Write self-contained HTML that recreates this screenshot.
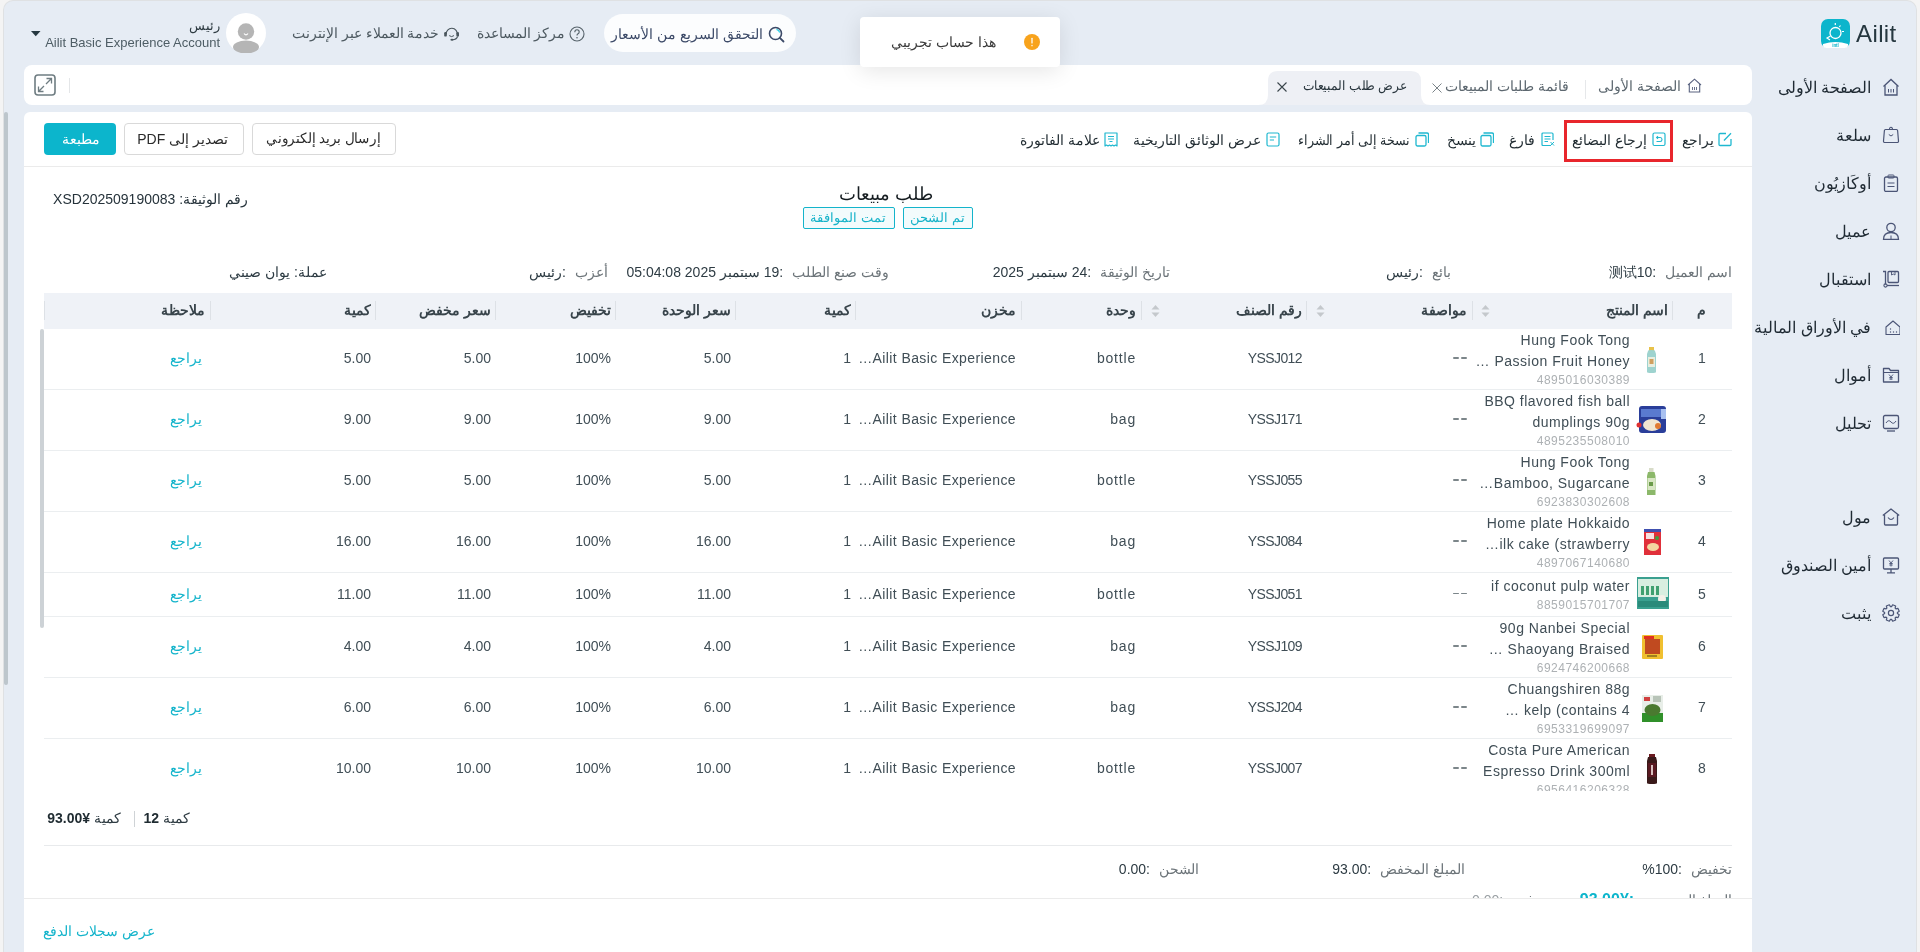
<!DOCTYPE html>
<html lang="ar"><head><meta charset="utf-8"><title>عرض طلب المبيعات</title><style>
*{box-sizing:border-box}
html,body{margin:0;padding:0}
body{width:1920px;height:952px;overflow:hidden;position:relative;background:#f4f4f4;font-family:"Liberation Sans",sans-serif}
.t{position:absolute;white-space:nowrap;direction:rtl;text-align:right}
.tl{position:absolute;white-space:nowrap;direction:ltr;text-align:left}
.b{position:absolute;display:block}
</style></head><body><div id="root" style="position:absolute;left:0;top:0;width:1920px;height:952px;will-change:transform">
<div class="b" style="left:4px;top:1px;width:1912px;height:960px;background:#e6ecf4;border-radius:9px 9px 0 0;box-shadow:0 0 0 1px #dfe1e3"></div>
<svg class="b" style="left:1821px;top:19px;" width="29" height="29" viewBox="0 0 29 29"><rect x="0" y="0" width="29" height="29" rx="7" fill="#0cb5cc"/>
<path d="M2 25 Q14.5 21 27 25 L27 26 Q27 29 24 29 L5 29 Q2 29 2 26Z" fill="#fff"/>
<text x="14.5" y="28.3" font-size="4.5" text-anchor="middle" fill="#0cb5cc" font-weight="bold" font-family="Liberation Sans">intl</text>
<circle cx="14.5" cy="14" r="5.5" fill="none" stroke="#fff" stroke-width="1.3"/>
<path d="M9.5 17 L6 19 L9 21" fill="none" stroke="#fff" stroke-width="1.2"/>
<path d="M14.3 4 L14.3 6" stroke="#fff" stroke-width="1.2"/><path d="M19.5 6.5 L18.3 8" stroke="#fff" stroke-width="1.2"/><path d="M21 12.5 L23 12.5" stroke="#fff" stroke-width="1.2"/></svg>
<div class="tl " style="left:1856px;top:18.5px;line-height:30px;font-size:24px;color:#26373f;font-weight:normal;letter-spacing:0.4px">Ailit</div>
<div class="b" style="left:860px;top:17px;width:200px;height:50px;background:#fff;border-radius:4px;box-shadow:0 4px 22px rgba(0,0,0,0.10);z-index:5"></div>
<svg class="b" style="left:1024px;top:34px;z-index:6" width="16" height="16" viewBox="0 0 16 16"><circle cx="8" cy="8" r="8" fill="#f8a31c"/><rect x="7.3" y="3.8" width="1.4" height="5.8" rx="0.5" fill="#fff" fill-opacity="0.9"/><rect x="7.3" y="10.8" width="1.4" height="1.5" rx="0.5" fill="#fff" fill-opacity="0.9"/></svg>
<div class="t " style="right:924px;top:32.0px;line-height:20px;font-size:14px;color:#3a3a3a;font-weight:normal;z-index:6">هذا حساب تجريبي</div>
<div class="b" style="left:604px;top:14px;width:192px;height:38px;background:#fcfdfe;border-radius:19px"></div>
<svg class="b" style="left:768px;top:26px;" width="17" height="17" viewBox="0 0 17 17"><circle cx="7.5" cy="7.5" r="6" fill="none" stroke="#3c4a68" stroke-width="1.6"/><path d="M11.8 11.8 L15.5 15.5" stroke="#3c4a68" stroke-width="1.8" stroke-linecap="round"/><path d="M8.5 3.3 A4.5 4.5 0 0 1 11.7 6.5" fill="none" stroke="#2ad0e6" stroke-width="1.2"/></svg>
<div class="t " style="right:1157px;top:24.0px;line-height:20px;font-size:14px;color:#3c4a68;font-weight:normal;">التحقق السريع من الأسعار</div>
<svg class="b" style="left:569px;top:26px;" width="16" height="16" viewBox="0 0 16 16"><circle cx="8" cy="8" r="7" fill="none" stroke="#56626a" stroke-width="1.1"/><path d="M5.8 6.2 Q5.8 3.8 8 3.8 Q10.2 3.8 10.2 5.9 Q10.2 7.2 8.7 7.9 Q8 8.3 8 9.5" fill="none" stroke="#56626a" stroke-width="1.1"/><circle cx="8" cy="11.7" r="0.8" fill="#56626a"/></svg>
<div class="t " style="right:1354.5px;top:24.0px;line-height:20px;font-size:13.5px;color:#4d5960;font-weight:normal;">مركز المساعدة</div>
<svg class="b" style="left:443px;top:25px;" width="17" height="16" viewBox="0 0 17 16"><path d="M3.2 9.5 A5.6 5.6 0 1 1 14.3 9.8" fill="none" stroke="#4a565d" stroke-width="1.1"/><rect x="1.2" y="7" width="2.6" height="4.6" rx="1.2" fill="#4a565d"/><rect x="13.4" y="7" width="2.6" height="4.6" rx="1.2" fill="#4a565d"/><path d="M14.6 11.5 Q13.5 14.6 9.5 14.8" fill="none" stroke="#4a565d" stroke-width="1.1"/><ellipse cx="9" cy="14.8" rx="1.6" ry="1" fill="#4a565d"/><path d="M6.2 10.6 Q8.6 12.6 11 10.6" fill="none" stroke="#4a565d" stroke-width="1"/></svg>
<div class="t " style="right:1480.5px;top:24.0px;line-height:20px;font-size:13.5px;color:#4d5960;font-weight:normal;">خدمة العملاء عبر الإنترنت</div>
<svg class="b" style="left:226px;top:13px;" width="40" height="40" viewBox="0 0 40 40"><circle cx="20" cy="20" r="20" fill="#fff"/><circle cx="20" cy="18.5" r="8.2" fill="#b5b5b5"/><path d="M18 20.5 Q20 23.2 22 20.5" fill="none" stroke="#fff" stroke-width="1.1"/><ellipse cx="20" cy="34" rx="13" ry="6.5" fill="#b5b5b5"/></svg>
<div class="t " style="right:1700px;top:15.5px;line-height:20px;font-size:13px;color:#2e3b42;font-weight:normal;">رئيس</div>
<div class="t " style="right:1700px;top:32.5px;line-height:20px;font-size:13px;color:#4e5d65;font-weight:normal;direction:ltr">Ailit Basic Experience Account</div>
<svg class="b" style="left:31px;top:31px;" width="10" height="6" viewBox="0 0 10 6"><path d="M0 0 L9.5 0 L4.75 5.3Z" fill="#263840"/></svg>
<svg class="b" style="left:1882px;top:78px;" width="18" height="18" viewBox="0 0 18 18"><path d="M1.5 8.5 L9 1.5 L16.5 8.5" fill="none" stroke="#4b5576" stroke-width="1.3"/><path d="M3 7.5 L3 17 L15 17 L15 7.5" fill="none" stroke="#4b5576" stroke-width="1.3"/><path d="M6.5 11 V14.5 M9 11 V14.5 M11.5 11 V14.5" stroke="#4b5576" stroke-width="1"/></svg>
<div class="t " style="right:49px;top:76.5px;line-height:22px;font-size:16px;color:#1f2a33;font-weight:normal;">الصفحة الأولى</div>
<svg class="b" style="left:1882px;top:126px;" width="18" height="18" viewBox="0 0 18 18"><path d="M3.5 3.5 L14.5 3.5 Q15.5 3.5 15.6 4.5 L16.5 15 Q16.6 16.5 15 16.5 L3 16.5 Q1.4 16.5 1.5 15 L2.4 4.5 Q2.5 3.5 3.5 3.5Z" fill="none" stroke="#4b5576" stroke-width="1.2" stroke-linejoin="round"/><path d="M7.5 3.5 Q7.5 1.2 9 1.2 Q10.5 1.2 10.5 3.5" fill="none" stroke="#4b5576" stroke-width="1.1"/><path d="M6.8 8.5 Q9 11.5 11.2 8.5" fill="none" stroke="#4b5576" stroke-width="1"/></svg>
<div class="t " style="right:49px;top:124.5px;line-height:22px;font-size:16px;color:#1f2a33;font-weight:normal;">سلعة</div>
<svg class="b" style="left:1882px;top:174px;" width="18" height="18" viewBox="0 0 18 18"><rect x="2.5" y="3" width="13" height="14.5" rx="1.5" fill="none" stroke="#4b5576" stroke-width="1.3"/><rect x="6" y="1" width="6" height="3" rx="0.8" fill="none" stroke="#4b5576" stroke-width="1"/><path d="M5.5 9 H12.5 M5.5 12.5 H12.5" stroke="#4b5576" stroke-width="1"/></svg>
<div class="t " style="right:49px;top:172.5px;line-height:22px;font-size:16px;color:#1f2a33;font-weight:normal;">أوكَازيُون</div>
<svg class="b" style="left:1882px;top:222px;" width="18" height="18" viewBox="0 0 18 18"><circle cx="9" cy="5.5" r="4.2" fill="none" stroke="#4b5576" stroke-width="1.3"/><path d="M1.5 17.5 Q1.5 10.5 9 10.5 Q16.5 10.5 16.5 17.5Z" fill="none" stroke="#4b5576" stroke-width="1.3"/><path d="M9 13.5 V17" stroke="#4b5576" stroke-width="1"/></svg>
<div class="t " style="right:49px;top:220.5px;line-height:22px;font-size:16px;color:#1f2a33;font-weight:normal;">عميل</div>
<svg class="b" style="left:1882px;top:270px;" width="18" height="18" viewBox="0 0 18 18"><path d="M1 1.5 L3.5 1.5 L3.5 14.5" fill="none" stroke="#4b5576" stroke-width="1.3"/><path d="M5 15.5 H17" stroke="#4b5576" stroke-width="1.3"/><circle cx="3.5" cy="15.5" r="1.6" fill="none" stroke="#4b5576" stroke-width="1.1"/><rect x="6" y="1.5" width="10.5" height="11" rx="1" fill="none" stroke="#4b5576" stroke-width="1.3"/><path d="M9.5 1.5 V5 L11.25 4 L13 5 V1.5" fill="none" stroke="#4b5576" stroke-width="0.9"/></svg>
<div class="t " style="right:49px;top:268.5px;line-height:22px;font-size:16px;color:#1f2a33;font-weight:normal;">استقبال</div>
<svg class="b" style="left:1882px;top:318px;" width="18" height="18" viewBox="0 0 18 18"><path d="M4 9 L11 3 L18 9 L18 16.5 L4 16.5Z" fill="none" stroke="#4b5576" stroke-width="1.1" stroke-linejoin="round"/><circle cx="8.5" cy="11" r="0.7" fill="#4b5576"/><circle cx="8.5" cy="14" r="0.7" fill="#4b5576"/><circle cx="11.5" cy="14" r="0.7" fill="#4b5576"/><circle cx="14.5" cy="14" r="0.7" fill="#4b5576"/></svg>
<div class="t " style="right:49px;top:316.5px;line-height:22px;font-size:16px;color:#1f2a33;font-weight:normal;">في الأوراق المالية</div>
<svg class="b" style="left:1882px;top:366px;" width="18" height="18" viewBox="0 0 18 18"><path d="M1.5 2.5 L7 2.5 L8.5 4.5 L16.5 4.5 L16.5 16 L1.5 16Z" fill="none" stroke="#4b5576" stroke-width="1.3" stroke-linejoin="round"/><path d="M1.5 6.5 H16.5" stroke="#4b5576" stroke-width="1"/><path d="M7 8.5 L9 11 L11 8.5 M9 11 V14 M7.3 11.5 H10.7 M7.3 13 H10.7" fill="none" stroke="#4b5576" stroke-width="0.9"/></svg>
<div class="t " style="right:49px;top:364.5px;line-height:22px;font-size:16px;color:#1f2a33;font-weight:normal;">أموال</div>
<svg class="b" style="left:1882px;top:414px;" width="18" height="18" viewBox="0 0 18 18"><rect x="1.5" y="1.5" width="15" height="13" rx="1.5" fill="none" stroke="#4b5576" stroke-width="1.3"/><path d="M4 9 Q6.5 5 9 8 Q11.5 11 14 7" fill="none" stroke="#4b5576" stroke-width="1"/><path d="M5 17 H13" stroke="#4b5576" stroke-width="1.3"/></svg>
<div class="t " style="right:49px;top:412.5px;line-height:22px;font-size:16px;color:#1f2a33;font-weight:normal;">تحليل</div>
<svg class="b" style="left:1882px;top:508px;" width="18" height="18" viewBox="0 0 18 18"><path d="M0.8 7.5 L9 1 L17.2 7.5" fill="none" stroke="#4b5576" stroke-width="1.3" stroke-linejoin="round"/><path d="M2.5 6.5 L2.5 16 Q2.5 17 3.5 17 L14.5 17 Q15.5 17 15.5 16 L15.5 6.5" fill="none" stroke="#4b5576" stroke-width="1.3"/><path d="M6 9.5 Q9 13.5 12 9.5" fill="none" stroke="#4b5576" stroke-width="1.1"/></svg>
<div class="t " style="right:49px;top:506.5px;line-height:22px;font-size:16px;color:#1f2a33;font-weight:normal;">مول</div>
<svg class="b" style="left:1882px;top:556px;" width="18" height="18" viewBox="0 0 18 18"><rect x="1.5" y="2" width="15" height="11" rx="1" fill="none" stroke="#4b5576" stroke-width="1.3"/><path d="M9 13 V16.5 M5 16.8 H13" stroke="#4b5576" stroke-width="1.3"/><path d="M7 4.5 L9 7 L11 4.5 M9 7 V10.5 M7.3 7.5 H10.7 M7.3 9 H10.7" fill="none" stroke="#4b5576" stroke-width="0.9"/></svg>
<div class="t " style="right:49px;top:554.5px;line-height:22px;font-size:16px;color:#1f2a33;font-weight:normal;">أمين الصندوق</div>
<svg class="b" style="left:1882px;top:604px;" width="18" height="18" viewBox="0 0 18 18"><polygon points="15.38,9.56 17.23,10.67 16.00,13.64 13.90,13.11 13.11,13.90 13.64,16.00 10.67,17.23 9.56,15.38 8.44,15.38 7.33,17.23 4.36,16.00 4.89,13.90 4.10,13.11 2.00,13.64 0.77,10.67 2.62,9.56 2.62,8.44 0.77,7.33 2.00,4.36 4.10,4.89 4.89,4.10 4.36,2.00 7.33,0.77 8.44,2.62 9.56,2.62 10.67,0.77 13.64,2.00 13.11,4.10 13.90,4.89 16.00,4.36 17.23,7.33 15.38,8.44" fill="none" stroke="#4b5576" stroke-width="1.2" stroke-linejoin="round"/><circle cx="9" cy="9" r="2.6" fill="none" stroke="#4b5576" stroke-width="1.2"/></svg>
<div class="t " style="right:49px;top:602.5px;line-height:22px;font-size:16px;color:#1f2a33;font-weight:normal;">يثبت</div>
<div class="b" style="left:24px;top:65px;width:1728px;height:40px;background:#fff;border-radius:8px"></div>
<svg class="b" style="left:34px;top:74px;" width="22" height="22" viewBox="0 0 22 22"><rect x="1" y="1" width="20" height="20" rx="3" fill="none" stroke="#6f7d82" stroke-width="1.6"/><path d="M12.5 4.5 H17.5 V9.5 M17.5 4.5 L12 10" fill="none" stroke="#6f7d82" stroke-width="1.3"/><path d="M9.5 17.5 H4.5 V12.5 M4.5 17.5 L10 12" fill="none" stroke="#6f7d82" stroke-width="1.3"/></svg>
<div class="b" style="left:69px;top:78px;width:1px;height:15px;background:#e4e6e8"></div>
<svg class="b" style="left:1687px;top:78px;" width="15" height="15" viewBox="0 0 15 15"><path d="M1 7 L7.5 1.2 L14 7" fill="none" stroke="#5a6380" stroke-width="1.1"/><path d="M2.3 6 L2.3 14 L12.7 14 L12.7 6" fill="none" stroke="#5a6380" stroke-width="1.1"/><path d="M5.5 9 V12 M7.5 9 V12 M9.5 9 V12" stroke="#5a6380" stroke-width="0.9"/></svg>
<div class="t " style="right:239px;top:76.0px;line-height:20px;font-size:14px;color:#5d6870;font-weight:normal;">الصفحة الأولى</div>
<div class="b" style="left:1585px;top:80px;width:1px;height:19px;background:#e6e8ea"></div>
<div class="t " style="right:351px;top:76.0px;line-height:20px;font-size:14px;color:#5d6870;font-weight:normal;">قائمة طلبات المبيعات</div>
<svg class="b" style="left:1432px;top:83px;" width="10" height="10" viewBox="0 0 10 10"><path d="M0.5 0.5 L9.5 9.5 M9.5 0.5 L0.5 9.5" stroke="#7a8388" stroke-width="1"/></svg>
<svg class="b" style="left:1258px;top:71px" width="173" height="34" viewBox="0 0 173 34"><path d="M0 34 Q10 34 10 24 L10 10 Q10 0 20 0 L153 0 Q163 0 163 10 L163 24 Q163 34 173 34Z" fill="#eef0f5"/></svg>
<div class="t " style="right:513px;top:76.0px;line-height:20px;font-size:13px;color:#27343c;font-weight:normal;transform:scaleX(0.94);transform-origin:right center">عرض طلب المبيعات</div>
<svg class="b" style="left:1277px;top:82px;" width="10" height="10" viewBox="0 0 10 10"><path d="M0.5 0.5 L9.5 9.5 M9.5 0.5 L0.5 9.5" stroke="#3a454b" stroke-width="1.1"/></svg>
<div class="b" style="left:24px;top:112px;width:1728px;height:850px;background:#fff;border-radius:6px 6px 0 0"></div>
<div class="b" style="left:4px;top:112px;width:4px;height:573px;background:#bdc6cc;border-radius:2px"></div>
<div class="b" style="left:24px;top:166px;width:1728px;height:1px;background:#ebebeb"></div>
<div class="b" style="left:44px;top:123px;width:72px;height:32px;background:#0cb5cc;border-radius:4px"></div>
<div class="t " style="right:1820px;top:129.0px;line-height:20px;font-size:14px;color:#fff;font-weight:normal;">مطبعة</div>
<div class="b" style="left:124px;top:123px;width:120px;height:32px;background:#fff;border:1px solid #d9d9d9;border-radius:4px"></div>
<div class="t " style="right:1692px;top:129.0px;line-height:20px;font-size:14px;color:#2a2a2a;font-weight:normal;">تصدير إلى PDF</div>
<div class="b" style="left:252px;top:123px;width:144px;height:32px;background:#fff;border:1px solid #d9d9d9;border-radius:4px"></div>
<div class="t " style="right:1539.5px;top:129.0px;line-height:20px;font-size:13.5px;color:#2a2a2a;font-weight:normal;transform:scaleX(0.965);transform-origin:right center">إرسال بريد إلكتروني</div>
<svg class="b" style="left:1718px;top:132px;" width="14" height="15" viewBox="0 0 14 15"><path d="M8 1.5 H2 Q1 1.5 1 2.5 V12.5 Q1 13.5 2 13.5 H12 Q13 13.5 13 12.5 V7" fill="none" stroke="#1fb8d0" stroke-width="1.3"/><path d="M6 8.5 L13 1.2" stroke="#1fb8d0" stroke-width="1.3"/></svg>
<div class="t " style="right:206px;top:129.5px;line-height:20px;font-size:14px;color:#1f2a30;font-weight:normal;">يراجع</div>
<svg class="b" style="left:1652px;top:132px;" width="14" height="15" viewBox="0 0 14 15"><rect x="1" y="1" width="12" height="12.5" rx="1.5" fill="none" stroke="#1fb8d0" stroke-width="1.2"/><path d="M4.8 5.5 H8.2 Q10 5.5 10 7.5 Q10 9.5 8.2 9.5 H4.5" fill="none" stroke="#1fb8d0" stroke-width="1.1"/><path d="M6 4.2 L4.6 5.5 L6 6.8" fill="none" stroke="#1fb8d0" stroke-width="1.1"/></svg>
<div class="t " style="right:273px;top:129.5px;line-height:20px;font-size:14px;color:#1f2a30;font-weight:normal;">إرجاع البضائع</div>
<svg class="b" style="left:1541px;top:132px;" width="14" height="15" viewBox="0 0 14 15"><path d="M10 13.5 H2 Q1 13.5 1 12.5 V2 Q1 1 2 1 H11 Q12 1 12 2 V8" fill="none" stroke="#1fb8d0" stroke-width="1.2"/><path d="M3.5 4.5 H9.5 M3.5 7 H9.5 M3.5 9.5 H7" stroke="#1fb8d0" stroke-width="1"/><path d="M9.5 10 L13 13.5 M13 10 L9.5 13.5" stroke="#1fb8d0" stroke-width="1"/></svg>
<div class="t " style="right:385px;top:129.5px;line-height:20px;font-size:14px;color:#1f2a30;font-weight:normal;">فارغ</div>
<svg class="b" style="left:1480px;top:132px;" width="14" height="15" viewBox="0 0 14 15"><rect x="1" y="3.5" width="10" height="10.5" rx="1.5" fill="none" stroke="#1fb8d0" stroke-width="1.3"/><path d="M3.5 1 H12 Q13.5 1 13.5 2.5 V11" fill="none" stroke="#1fb8d0" stroke-width="1.3"/></svg>
<div class="t " style="right:444px;top:129.5px;line-height:20px;font-size:14px;color:#1f2a30;font-weight:normal;">ينسخ</div>
<svg class="b" style="left:1415px;top:132px;" width="14" height="15" viewBox="0 0 14 15"><rect x="1" y="3.5" width="10" height="10.5" rx="1.5" fill="none" stroke="#1fb8d0" stroke-width="1.3"/><path d="M3.5 1 H12 Q13.5 1 13.5 2.5 V11" fill="none" stroke="#1fb8d0" stroke-width="1.3"/></svg>
<div class="t " style="right:510px;top:129.5px;line-height:20px;font-size:14px;color:#1f2a30;font-weight:normal;transform:scaleX(0.905);transform-origin:right center">نسخة إلى أمر الشراء</div>
<svg class="b" style="left:1266px;top:132px;" width="14" height="15" viewBox="0 0 14 15"><rect x="1" y="1" width="12" height="13" rx="1.5" fill="none" stroke="#1fb8d0" stroke-width="1.2"/><path d="M3.8 5 H10.2 M3.8 8 H8" stroke="#1fb8d0" stroke-width="1.1"/></svg>
<div class="t " style="right:659px;top:129.5px;line-height:20px;font-size:14px;color:#1f2a30;font-weight:normal;">عرض الوثائق التاريخية</div>
<svg class="b" style="left:1104px;top:132px;" width="14" height="15" viewBox="0 0 14 15"><path d="M1 1 H13 V14 L11.5 13 L10 14 L8.5 13 L7 14 L5.5 13 L4 14 L2.5 13 L1 14Z" fill="none" stroke="#1fb8d0" stroke-width="1.2" stroke-linejoin="round"/><path d="M4 4.5 H10 M4 7 H10 M5.5 9.5 H8.5" stroke="#1fb8d0" stroke-width="1"/></svg>
<div class="t " style="right:820px;top:129.5px;line-height:20px;font-size:14px;color:#1f2a30;font-weight:normal;">علامة الفاتورة</div>
<div class="b" style="left:1564px;top:120px;width:109px;height:42px;border:3px solid #e8262c"></div>
<div class="t " style="right:987px;top:181.5px;line-height:24px;font-size:17.5px;color:#151c20;font-weight:normal;">طلب مبيعات</div>
<div class="b" style="left:903px;top:207px;width:70px;height:22px;border:1.5px solid #14b4cb;background:#f3fbfc;border-radius:2px"></div>
<div class="t " style="right:955px;top:208.0px;line-height:20px;font-size:13px;color:#17b3c9;font-weight:normal;">تم الشحن</div>
<div class="b" style="left:803px;top:207px;width:92px;height:22px;border:1.5px solid #14b4cb;background:#f3fbfc;border-radius:2px"></div>
<div class="t " style="right:1034px;top:208.0px;line-height:20px;font-size:13px;color:#17b3c9;font-weight:normal;">تمت الموافقة</div>
<div class="t " style="right:1672px;top:189.0px;line-height:20px;font-size:14px;color:#26333b;font-weight:normal;">رقم الوثيقة: XSD202509190083</div>
<div class="t" style="right:188px;top:262px;line-height:20px;font-size:14px;color:#6c7479">اسم العميل<span style="color:#2d3b43;margin-right:9px">:测试10</span></div>
<div class="t" style="right:469px;top:262px;line-height:20px;font-size:14px;color:#6c7479">بائع<span style="color:#2d3b43;margin-right:9px">:رئيس</span></div>
<div class="t" style="right:750px;top:262px;line-height:20px;font-size:14px;color:#6c7479">تاريخ الوثيقة<span style="color:#2d3b43;margin-right:9px">:24 سبتمبر 2025</span></div>
<div class="t" style="right:1031px;top:262px;line-height:20px;font-size:14px;color:#6c7479">وقت صنع الطلب<span style="color:#2d3b43;margin-right:9px">:19 سبتمبر 2025 05:04:08</span></div>
<div class="t" style="right:1312px;top:262px;line-height:20px;font-size:14px;color:#6c7479">أعزب<span style="color:#2d3b43;margin-right:9px">:رئيس</span></div>
<div class="t" style="right:1593px;top:262px;line-height:20px;font-size:14px;color:#2d3b43">عملة: يوان صيني</div>
<div class="b" style="left:44px;top:293px;width:1688px;height:36px;background:#eff2f7"></div>
<div class="b" style="left:1672px;top:301px;width:1px;height:19px;background:#dde1e6"></div>
<div class="b" style="left:1472px;top:301px;width:1px;height:19px;background:#dde1e6"></div>
<div class="b" style="left:1306px;top:301px;width:1px;height:19px;background:#dde1e6"></div>
<div class="b" style="left:1141px;top:301px;width:1px;height:19px;background:#dde1e6"></div>
<div class="b" style="left:1021px;top:301px;width:1px;height:19px;background:#dde1e6"></div>
<div class="b" style="left:855px;top:301px;width:1px;height:19px;background:#dde1e6"></div>
<div class="b" style="left:735px;top:301px;width:1px;height:19px;background:#dde1e6"></div>
<div class="b" style="left:615px;top:301px;width:1px;height:19px;background:#dde1e6"></div>
<div class="b" style="left:495px;top:301px;width:1px;height:19px;background:#dde1e6"></div>
<div class="b" style="left:375px;top:301px;width:1px;height:19px;background:#dde1e6"></div>
<div class="b" style="left:210px;top:301px;width:1px;height:19px;background:#dde1e6"></div>
<div class="b" style="left:44px;top:301px;width:1px;height:19px;background:#dde1e6"></div>
<div class="t " style="right:214px;top:299.5px;line-height:20px;font-size:14px;color:#38444b;font-weight:bold;">م</div>
<div class="t " style="right:252px;top:299.5px;line-height:20px;font-size:14px;color:#38444b;font-weight:bold;">اسم المنتج</div>
<div class="t " style="right:453px;top:299.5px;line-height:20px;font-size:14px;color:#38444b;font-weight:bold;">مواصفة</div>
<div class="t " style="right:618px;top:299.5px;line-height:20px;font-size:14px;color:#38444b;font-weight:bold;">رقم الصنف</div>
<div class="t " style="right:784px;top:299.5px;line-height:20px;font-size:14px;color:#38444b;font-weight:bold;">وحدة</div>
<div class="t " style="right:904px;top:299.5px;line-height:20px;font-size:14px;color:#38444b;font-weight:bold;">مخزن</div>
<div class="t " style="right:1069px;top:299.5px;line-height:20px;font-size:14px;color:#38444b;font-weight:bold;">كمية</div>
<div class="t " style="right:1189px;top:299.5px;line-height:20px;font-size:14px;color:#38444b;font-weight:bold;">سعر الوحدة</div>
<div class="t " style="right:1309px;top:299.5px;line-height:20px;font-size:14px;color:#38444b;font-weight:bold;">تخفيض</div>
<div class="t " style="right:1429px;top:299.5px;line-height:20px;font-size:14px;color:#38444b;font-weight:bold;">سعر مخفض</div>
<div class="t " style="right:1549px;top:299.5px;line-height:20px;font-size:14px;color:#38444b;font-weight:bold;">كمية</div>
<div class="t " style="right:1715px;top:299.5px;line-height:20px;font-size:14px;color:#38444b;font-weight:bold;">ملاحظة</div>
<svg class="b" style="left:1481px;top:304px;" width="9" height="14" viewBox="0 0 9 14"><path d="M4.5 1 L8.5 5.5 H0.5Z" fill="#c4c8cc"/><path d="M4.5 13 L8.5 8.5 H0.5Z" fill="#c4c8cc"/></svg>
<svg class="b" style="left:1316px;top:304px;" width="9" height="14" viewBox="0 0 9 14"><path d="M4.5 1 L8.5 5.5 H0.5Z" fill="#c4c8cc"/><path d="M4.5 13 L8.5 8.5 H0.5Z" fill="#c4c8cc"/></svg>
<svg class="b" style="left:1151px;top:304px;" width="9" height="14" viewBox="0 0 9 14"><path d="M4.5 1 L8.5 5.5 H0.5Z" fill="#c4c8cc"/><path d="M4.5 13 L8.5 8.5 H0.5Z" fill="#c4c8cc"/></svg>
<div class="b" style="left:24px;top:329px;width:1728px;height:462px;overflow:hidden">
<div class="b" style="left:20px;top:60px;width:1688px;height:1px;background:#ebeef0"></div>
<div class="b" style="left:1658px;top:19.0px;width:40px;text-align:center;line-height:20px;font-size:14px;color:#404e56">1</div>
<svg class="b" style="left:1612px;top:13px" width="33" height="33" viewBox="0 0 33 33"><rect x="13" y="5" width="5" height="4" fill="#e8c24a"/><path d="M12 9 Q12 8 15.5 8 Q19 8 19 9 L20 12 L20 30 Q20 31 15.5 31 Q11 31 11 30 L11 12Z" fill="#9ed3cf"/><rect x="12" y="15" width="7" height="10" fill="#e8eee0"/><rect x="13.5" y="17" width="4" height="5" fill="#d0a060"/></svg>
<div class="t" style="right:122px;top:0.5px;line-height:20px;font-size:14px;color:#404e56;direction:ltr;letter-spacing:0.5px">Hung Fook Tong</div>
<div class="t" style="right:122px;top:21.5px;line-height:20px;font-size:14px;color:#404e56;direction:ltr;letter-spacing:0.5px">… Passion Fruit Honey</div>
<div class="t" style="right:122px;top:42.5px;line-height:16px;font-size:12px;color:#adb1b4;direction:ltr;letter-spacing:0.5px">4895016030389</div>
<div class="b" style="left:1429px;top:28.0px;width:6px;height:1.6px;background:#7c868a;border-radius:1px"></div>
<div class="b" style="left:1437px;top:28.0px;width:6px;height:1.6px;background:#7c868a;border-radius:1px"></div>
<div class="t" style="right:450px;top:19.0px;line-height:20px;font-size:14px;color:#404e56;direction:ltr;letter-spacing:-0.6px">YSSJ012</div>
<div class="t" style="right:616px;top:19.0px;line-height:20px;font-size:14px;color:#404e56;direction:ltr;letter-spacing:0.8px">bottle</div>
<div class="t" style="right:736px;top:19.0px;line-height:20px;font-size:14px;color:#404e56;direction:ltr;letter-spacing:0.4px">…Ailit Basic Experience</div>
<div class="t" style="right:901px;top:19.0px;line-height:20px;font-size:14px;color:#404e56;">1</div>
<div class="t" style="right:1021px;top:19.0px;line-height:20px;font-size:14px;color:#404e56;direction:ltr">5.00</div>
<div class="t" style="right:1141px;top:19.0px;line-height:20px;font-size:14px;color:#404e56;direction:ltr">100%</div>
<div class="t" style="right:1261px;top:19.0px;line-height:20px;font-size:14px;color:#404e56;direction:ltr">5.00</div>
<div class="t" style="right:1381px;top:19.0px;line-height:20px;font-size:14px;color:#404e56;direction:ltr">5.00</div>
<div class="t" style="right:1550px;top:19.0px;line-height:20px;font-size:14px;color:#14b4cb;">يراجع</div>
<div class="b" style="left:20px;top:121px;width:1688px;height:1px;background:#ebeef0"></div>
<div class="b" style="left:1658px;top:80.0px;width:40px;text-align:center;line-height:20px;font-size:14px;color:#404e56">2</div>
<svg class="b" style="left:1612px;top:74px" width="33" height="33" viewBox="0 0 33 33"><rect x="3" y="3" width="27" height="27" rx="3" fill="#2a3e9a"/><rect x="5" y="6" width="20" height="8" fill="#5a7ad0"/><ellipse cx="16" cy="22" rx="9" ry="6" fill="#f0e6d0"/><circle cx="22" cy="23" r="3" fill="#e07a30"/><circle cx="3" cy="22" r="2.5" fill="#e03030"/><rect x="25" y="6" width="5" height="10" fill="#a8c0f0"/></svg>
<div class="t" style="right:122px;top:61.5px;line-height:20px;font-size:14px;color:#404e56;direction:ltr;letter-spacing:0.5px">BBQ flavored fish ball</div>
<div class="t" style="right:122px;top:82.5px;line-height:20px;font-size:14px;color:#404e56;direction:ltr;letter-spacing:0.5px">dumplings 90g</div>
<div class="t" style="right:122px;top:103.5px;line-height:16px;font-size:12px;color:#adb1b4;direction:ltr;letter-spacing:0.5px">4895235508010</div>
<div class="b" style="left:1429px;top:89.0px;width:6px;height:1.6px;background:#7c868a;border-radius:1px"></div>
<div class="b" style="left:1437px;top:89.0px;width:6px;height:1.6px;background:#7c868a;border-radius:1px"></div>
<div class="t" style="right:450px;top:80.0px;line-height:20px;font-size:14px;color:#404e56;direction:ltr;letter-spacing:-0.6px">YSSJ171</div>
<div class="t" style="right:616px;top:80.0px;line-height:20px;font-size:14px;color:#404e56;direction:ltr;letter-spacing:0.8px">bag</div>
<div class="t" style="right:736px;top:80.0px;line-height:20px;font-size:14px;color:#404e56;direction:ltr;letter-spacing:0.4px">…Ailit Basic Experience</div>
<div class="t" style="right:901px;top:80.0px;line-height:20px;font-size:14px;color:#404e56;">1</div>
<div class="t" style="right:1021px;top:80.0px;line-height:20px;font-size:14px;color:#404e56;direction:ltr">9.00</div>
<div class="t" style="right:1141px;top:80.0px;line-height:20px;font-size:14px;color:#404e56;direction:ltr">100%</div>
<div class="t" style="right:1261px;top:80.0px;line-height:20px;font-size:14px;color:#404e56;direction:ltr">9.00</div>
<div class="t" style="right:1381px;top:80.0px;line-height:20px;font-size:14px;color:#404e56;direction:ltr">9.00</div>
<div class="t" style="right:1550px;top:80.0px;line-height:20px;font-size:14px;color:#14b4cb;">يراجع</div>
<div class="b" style="left:20px;top:182px;width:1688px;height:1px;background:#ebeef0"></div>
<div class="b" style="left:1658px;top:141.0px;width:40px;text-align:center;line-height:20px;font-size:14px;color:#404e56">3</div>
<svg class="b" style="left:1612px;top:135px" width="33" height="33" viewBox="0 0 33 33"><rect x="13" y="4" width="4.5" height="4" fill="#d8dcc8"/><path d="M12 8 L18.5 8 L19.5 12 L19.5 31 L11 31 L11 12Z" fill="#8cb86a"/><rect x="11.5" y="14" width="7.5" height="12" fill="#d8e6c4"/><rect x="13" y="18" width="4" height="4" fill="#6a9a4a"/></svg>
<div class="t" style="right:122px;top:122.5px;line-height:20px;font-size:14px;color:#404e56;direction:ltr;letter-spacing:0.5px">Hung Fook Tong</div>
<div class="t" style="right:122px;top:143.5px;line-height:20px;font-size:14px;color:#404e56;direction:ltr;letter-spacing:0.5px">…Bamboo, Sugarcane</div>
<div class="t" style="right:122px;top:164.5px;line-height:16px;font-size:12px;color:#adb1b4;direction:ltr;letter-spacing:0.5px">6923830302608</div>
<div class="b" style="left:1429px;top:150.0px;width:6px;height:1.6px;background:#7c868a;border-radius:1px"></div>
<div class="b" style="left:1437px;top:150.0px;width:6px;height:1.6px;background:#7c868a;border-radius:1px"></div>
<div class="t" style="right:450px;top:141.0px;line-height:20px;font-size:14px;color:#404e56;direction:ltr;letter-spacing:-0.6px">YSSJ055</div>
<div class="t" style="right:616px;top:141.0px;line-height:20px;font-size:14px;color:#404e56;direction:ltr;letter-spacing:0.8px">bottle</div>
<div class="t" style="right:736px;top:141.0px;line-height:20px;font-size:14px;color:#404e56;direction:ltr;letter-spacing:0.4px">…Ailit Basic Experience</div>
<div class="t" style="right:901px;top:141.0px;line-height:20px;font-size:14px;color:#404e56;">1</div>
<div class="t" style="right:1021px;top:141.0px;line-height:20px;font-size:14px;color:#404e56;direction:ltr">5.00</div>
<div class="t" style="right:1141px;top:141.0px;line-height:20px;font-size:14px;color:#404e56;direction:ltr">100%</div>
<div class="t" style="right:1261px;top:141.0px;line-height:20px;font-size:14px;color:#404e56;direction:ltr">5.00</div>
<div class="t" style="right:1381px;top:141.0px;line-height:20px;font-size:14px;color:#404e56;direction:ltr">5.00</div>
<div class="t" style="right:1550px;top:141.0px;line-height:20px;font-size:14px;color:#14b4cb;">يراجع</div>
<div class="b" style="left:20px;top:243px;width:1688px;height:1px;background:#ebeef0"></div>
<div class="b" style="left:1658px;top:202.0px;width:40px;text-align:center;line-height:20px;font-size:14px;color:#404e56">4</div>
<svg class="b" style="left:1612px;top:196px" width="33" height="33" viewBox="0 0 33 33"><rect x="8" y="4" width="17" height="26" fill="#e0303a"/><rect x="8" y="4" width="17" height="3" fill="#4050b0"/><rect x="10" y="8" width="8" height="6" fill="#f8e0e0"/><ellipse cx="17" cy="22" rx="6" ry="4" fill="#f4d8a0"/><circle cx="21" cy="13" r="2" fill="#40a040"/></svg>
<div class="t" style="right:122px;top:183.5px;line-height:20px;font-size:14px;color:#404e56;direction:ltr;letter-spacing:0.5px">Home plate Hokkaido</div>
<div class="t" style="right:122px;top:204.5px;line-height:20px;font-size:14px;color:#404e56;direction:ltr;letter-spacing:0.5px">…ilk cake (strawberry</div>
<div class="t" style="right:122px;top:225.5px;line-height:16px;font-size:12px;color:#adb1b4;direction:ltr;letter-spacing:0.5px">4897067140680</div>
<div class="b" style="left:1429px;top:211.0px;width:6px;height:1.6px;background:#7c868a;border-radius:1px"></div>
<div class="b" style="left:1437px;top:211.0px;width:6px;height:1.6px;background:#7c868a;border-radius:1px"></div>
<div class="t" style="right:450px;top:202.0px;line-height:20px;font-size:14px;color:#404e56;direction:ltr;letter-spacing:-0.6px">YSSJ084</div>
<div class="t" style="right:616px;top:202.0px;line-height:20px;font-size:14px;color:#404e56;direction:ltr;letter-spacing:0.8px">bag</div>
<div class="t" style="right:736px;top:202.0px;line-height:20px;font-size:14px;color:#404e56;direction:ltr;letter-spacing:0.4px">…Ailit Basic Experience</div>
<div class="t" style="right:901px;top:202.0px;line-height:20px;font-size:14px;color:#404e56;">1</div>
<div class="t" style="right:1021px;top:202.0px;line-height:20px;font-size:14px;color:#404e56;direction:ltr">16.00</div>
<div class="t" style="right:1141px;top:202.0px;line-height:20px;font-size:14px;color:#404e56;direction:ltr">100%</div>
<div class="t" style="right:1261px;top:202.0px;line-height:20px;font-size:14px;color:#404e56;direction:ltr">16.00</div>
<div class="t" style="right:1381px;top:202.0px;line-height:20px;font-size:14px;color:#404e56;direction:ltr">16.00</div>
<div class="t" style="right:1550px;top:202.0px;line-height:20px;font-size:14px;color:#14b4cb;">يراجع</div>
<div class="b" style="left:20px;top:287px;width:1688px;height:1px;background:#ebeef0"></div>
<div class="b" style="left:1658px;top:254.5px;width:40px;text-align:center;line-height:20px;font-size:14px;color:#404e56">5</div>
<svg class="b" style="left:1612px;top:248px" width="33" height="33" viewBox="0 0 33 33"><rect x="1" y="0" width="32" height="32" fill="#3aa090"/><rect x="2" y="2" width="30" height="18" fill="#d8eee0"/><rect x="5" y="9" width="3" height="9" fill="#40a070"/><rect x="10" y="9" width="3" height="9" fill="#40a070"/><rect x="15" y="9" width="3" height="9" fill="#40a070"/><rect x="20" y="9" width="3" height="9" fill="#40a070"/><circle cx="26" cy="22" r="4" fill="#f4f0e8"/><rect x="2" y="24" width="30" height="6" fill="#2a8a7a"/></svg>
<div class="t" style="right:122px;top:246.5px;line-height:20px;font-size:14px;color:#404e56;direction:ltr;letter-spacing:0.5px">if coconut pulp water</div>
<div class="t" style="right:122px;top:268.0px;line-height:16px;font-size:12px;color:#adb1b4;direction:ltr;letter-spacing:0.5px">8859015701707</div>
<div class="b" style="left:1429px;top:263.5px;width:6px;height:1.6px;background:#7c868a;border-radius:1px"></div>
<div class="b" style="left:1437px;top:263.5px;width:6px;height:1.6px;background:#7c868a;border-radius:1px"></div>
<div class="t" style="right:450px;top:254.5px;line-height:20px;font-size:14px;color:#404e56;direction:ltr;letter-spacing:-0.6px">YSSJ051</div>
<div class="t" style="right:616px;top:254.5px;line-height:20px;font-size:14px;color:#404e56;direction:ltr;letter-spacing:0.8px">bottle</div>
<div class="t" style="right:736px;top:254.5px;line-height:20px;font-size:14px;color:#404e56;direction:ltr;letter-spacing:0.4px">…Ailit Basic Experience</div>
<div class="t" style="right:901px;top:254.5px;line-height:20px;font-size:14px;color:#404e56;">1</div>
<div class="t" style="right:1021px;top:254.5px;line-height:20px;font-size:14px;color:#404e56;direction:ltr">11.00</div>
<div class="t" style="right:1141px;top:254.5px;line-height:20px;font-size:14px;color:#404e56;direction:ltr">100%</div>
<div class="t" style="right:1261px;top:254.5px;line-height:20px;font-size:14px;color:#404e56;direction:ltr">11.00</div>
<div class="t" style="right:1381px;top:254.5px;line-height:20px;font-size:14px;color:#404e56;direction:ltr">11.00</div>
<div class="t" style="right:1550px;top:254.5px;line-height:20px;font-size:14px;color:#14b4cb;">يراجع</div>
<div class="b" style="left:20px;top:348px;width:1688px;height:1px;background:#ebeef0"></div>
<div class="b" style="left:1658px;top:307.0px;width:40px;text-align:center;line-height:20px;font-size:14px;color:#404e56">6</div>
<svg class="b" style="left:1612px;top:301px" width="33" height="33" viewBox="0 0 33 33"><rect x="6" y="5" width="21" height="24" rx="1" fill="#f0c030"/><rect x="9" y="9" width="15" height="15" fill="#c04a20"/><rect x="8" y="6" width="10" height="3" fill="#e03020"/><rect x="11" y="25" width="10" height="2" fill="#a08020"/></svg>
<div class="t" style="right:122px;top:288.5px;line-height:20px;font-size:14px;color:#404e56;direction:ltr;letter-spacing:0.5px">90g Nanbei Special</div>
<div class="t" style="right:122px;top:309.5px;line-height:20px;font-size:14px;color:#404e56;direction:ltr;letter-spacing:0.5px">… Shaoyang Braised</div>
<div class="t" style="right:122px;top:330.5px;line-height:16px;font-size:12px;color:#adb1b4;direction:ltr;letter-spacing:0.5px">6924746200668</div>
<div class="b" style="left:1429px;top:316.0px;width:6px;height:1.6px;background:#7c868a;border-radius:1px"></div>
<div class="b" style="left:1437px;top:316.0px;width:6px;height:1.6px;background:#7c868a;border-radius:1px"></div>
<div class="t" style="right:450px;top:307.0px;line-height:20px;font-size:14px;color:#404e56;direction:ltr;letter-spacing:-0.6px">YSSJ109</div>
<div class="t" style="right:616px;top:307.0px;line-height:20px;font-size:14px;color:#404e56;direction:ltr;letter-spacing:0.8px">bag</div>
<div class="t" style="right:736px;top:307.0px;line-height:20px;font-size:14px;color:#404e56;direction:ltr;letter-spacing:0.4px">…Ailit Basic Experience</div>
<div class="t" style="right:901px;top:307.0px;line-height:20px;font-size:14px;color:#404e56;">1</div>
<div class="t" style="right:1021px;top:307.0px;line-height:20px;font-size:14px;color:#404e56;direction:ltr">4.00</div>
<div class="t" style="right:1141px;top:307.0px;line-height:20px;font-size:14px;color:#404e56;direction:ltr">100%</div>
<div class="t" style="right:1261px;top:307.0px;line-height:20px;font-size:14px;color:#404e56;direction:ltr">4.00</div>
<div class="t" style="right:1381px;top:307.0px;line-height:20px;font-size:14px;color:#404e56;direction:ltr">4.00</div>
<div class="t" style="right:1550px;top:307.0px;line-height:20px;font-size:14px;color:#14b4cb;">يراجع</div>
<div class="b" style="left:20px;top:409px;width:1688px;height:1px;background:#ebeef0"></div>
<div class="b" style="left:1658px;top:368.0px;width:40px;text-align:center;line-height:20px;font-size:14px;color:#404e56">7</div>
<svg class="b" style="left:1612px;top:362px" width="33" height="33" viewBox="0 0 33 33"><rect x="6" y="4" width="21" height="27" fill="#e8eee8"/><rect x="6" y="22" width="21" height="9" fill="#30902a"/><ellipse cx="16.5" cy="19" rx="8" ry="6" fill="#4a7a30"/><rect x="8" y="6" width="6" height="4" fill="#d04040"/><rect x="17" y="5" width="8" height="6" fill="#b8c4b8"/></svg>
<div class="t" style="right:122px;top:349.5px;line-height:20px;font-size:14px;color:#404e56;direction:ltr;letter-spacing:0.5px">Chuangshiren 88g</div>
<div class="t" style="right:122px;top:370.5px;line-height:20px;font-size:14px;color:#404e56;direction:ltr;letter-spacing:0.5px">… kelp (contains 4</div>
<div class="t" style="right:122px;top:391.5px;line-height:16px;font-size:12px;color:#adb1b4;direction:ltr;letter-spacing:0.5px">6953319699097</div>
<div class="b" style="left:1429px;top:377.0px;width:6px;height:1.6px;background:#7c868a;border-radius:1px"></div>
<div class="b" style="left:1437px;top:377.0px;width:6px;height:1.6px;background:#7c868a;border-radius:1px"></div>
<div class="t" style="right:450px;top:368.0px;line-height:20px;font-size:14px;color:#404e56;direction:ltr;letter-spacing:-0.6px">YSSJ204</div>
<div class="t" style="right:616px;top:368.0px;line-height:20px;font-size:14px;color:#404e56;direction:ltr;letter-spacing:0.8px">bag</div>
<div class="t" style="right:736px;top:368.0px;line-height:20px;font-size:14px;color:#404e56;direction:ltr;letter-spacing:0.4px">…Ailit Basic Experience</div>
<div class="t" style="right:901px;top:368.0px;line-height:20px;font-size:14px;color:#404e56;">1</div>
<div class="t" style="right:1021px;top:368.0px;line-height:20px;font-size:14px;color:#404e56;direction:ltr">6.00</div>
<div class="t" style="right:1141px;top:368.0px;line-height:20px;font-size:14px;color:#404e56;direction:ltr">100%</div>
<div class="t" style="right:1261px;top:368.0px;line-height:20px;font-size:14px;color:#404e56;direction:ltr">6.00</div>
<div class="t" style="right:1381px;top:368.0px;line-height:20px;font-size:14px;color:#404e56;direction:ltr">6.00</div>
<div class="t" style="right:1550px;top:368.0px;line-height:20px;font-size:14px;color:#14b4cb;">يراجع</div>
<div class="b" style="left:20px;top:470px;width:1688px;height:1px;background:#ebeef0"></div>
<div class="b" style="left:1658px;top:429.0px;width:40px;text-align:center;line-height:20px;font-size:14px;color:#404e56">8</div>
<svg class="b" style="left:1612px;top:423px" width="33" height="33" viewBox="0 0 33 33"><rect x="13" y="2" width="6" height="3" fill="#6a1a20"/><path d="M12 5 L20 5 L21 9 L21 31 Q21 32 16 32 Q11 32 11 31 L11 9Z" fill="#3a1a1a"/><rect x="12" y="11" width="8" height="14" fill="#5a1a22"/><rect x="15" y="13" width="2" height="10" fill="#d8c0c0"/></svg>
<div class="t" style="right:122px;top:410.5px;line-height:20px;font-size:14px;color:#404e56;direction:ltr;letter-spacing:0.5px">Costa Pure American</div>
<div class="t" style="right:122px;top:431.5px;line-height:20px;font-size:14px;color:#404e56;direction:ltr;letter-spacing:0.5px">Espresso Drink 300ml</div>
<div class="t" style="right:122px;top:452.5px;line-height:16px;font-size:12px;color:#adb1b4;direction:ltr;letter-spacing:0.5px">6956416206328</div>
<div class="b" style="left:1429px;top:438.0px;width:6px;height:1.6px;background:#7c868a;border-radius:1px"></div>
<div class="b" style="left:1437px;top:438.0px;width:6px;height:1.6px;background:#7c868a;border-radius:1px"></div>
<div class="t" style="right:450px;top:429.0px;line-height:20px;font-size:14px;color:#404e56;direction:ltr;letter-spacing:-0.6px">YSSJ007</div>
<div class="t" style="right:616px;top:429.0px;line-height:20px;font-size:14px;color:#404e56;direction:ltr;letter-spacing:0.8px">bottle</div>
<div class="t" style="right:736px;top:429.0px;line-height:20px;font-size:14px;color:#404e56;direction:ltr;letter-spacing:0.4px">…Ailit Basic Experience</div>
<div class="t" style="right:901px;top:429.0px;line-height:20px;font-size:14px;color:#404e56;">1</div>
<div class="t" style="right:1021px;top:429.0px;line-height:20px;font-size:14px;color:#404e56;direction:ltr">10.00</div>
<div class="t" style="right:1141px;top:429.0px;line-height:20px;font-size:14px;color:#404e56;direction:ltr">100%</div>
<div class="t" style="right:1261px;top:429.0px;line-height:20px;font-size:14px;color:#404e56;direction:ltr">10.00</div>
<div class="t" style="right:1381px;top:429.0px;line-height:20px;font-size:14px;color:#404e56;direction:ltr">10.00</div>
<div class="t" style="right:1550px;top:429.0px;line-height:20px;font-size:14px;color:#14b4cb;">يراجع</div>
</div>
<div class="b" style="left:40px;top:329px;width:4px;height:299px;background:#cdd2d6;border-radius:2px"></div>
<div class="t " style="right:1730px;top:808.0px;line-height:20px;font-size:14px;color:#2e3b42;font-weight:normal;">كمية <b style="font-weight:bold;color:#1f2b31">12</b></div>
<div class="b" style="left:134px;top:811px;width:1px;height:16px;background:#cfd3d6"></div>
<div class="t " style="right:1799px;top:808.0px;line-height:20px;font-size:14px;color:#2e3b42;font-weight:normal;">كمية <b style="font-weight:bold;color:#1f2b31">¥93.00</b></div>
<div class="b" style="left:44px;top:845px;width:1688px;height:1px;background:#e8eaec"></div>
<div class="b" style="left:24px;top:846px;width:1728px;height:52px;overflow:hidden">
<div class="t" style="right:20px;top:13px;line-height:20px;font-size:14px;color:#6c7479">تخفيض<span style="color:#2d3b43;font-weight:normal;margin-right:9px">:100%</span></div>
<div class="t" style="right:287px;top:13px;line-height:20px;font-size:14px;color:#6c7479">المبلغ المخفض<span style="color:#2d3b43;font-weight:normal;margin-right:9px">:93.00</span></div>
<div class="t" style="right:553px;top:13px;line-height:20px;font-size:14px;color:#6c7479">الشحن<span style="color:#2d3b43;font-weight:normal;margin-right:9px">:0.00</span></div>
<div class="t" style="right:20px;top:43px;line-height:22px;font-size:14px;color:#6c7479">المبلغ المستحق<span style="color:#0cb5cc;font-weight:bold;font-size:16px;margin-right:9px">:¥93.00</span></div>
<div class="t" style="right:195px;top:44px;line-height:20px;font-size:14px;color:#6c7479">تم دفعه<span style="color:#9aa0a4;margin-right:9px">:0.00</span></div>
</div>
<div class="b" style="left:24px;top:898px;width:1728px;height:1px;background:#ebebeb"></div>
<div class="t " style="right:1765px;top:921.0px;line-height:20px;font-size:14px;color:#14b4cb;font-weight:normal;">عرض سجلات الدفع</div>
</div></body></html>
